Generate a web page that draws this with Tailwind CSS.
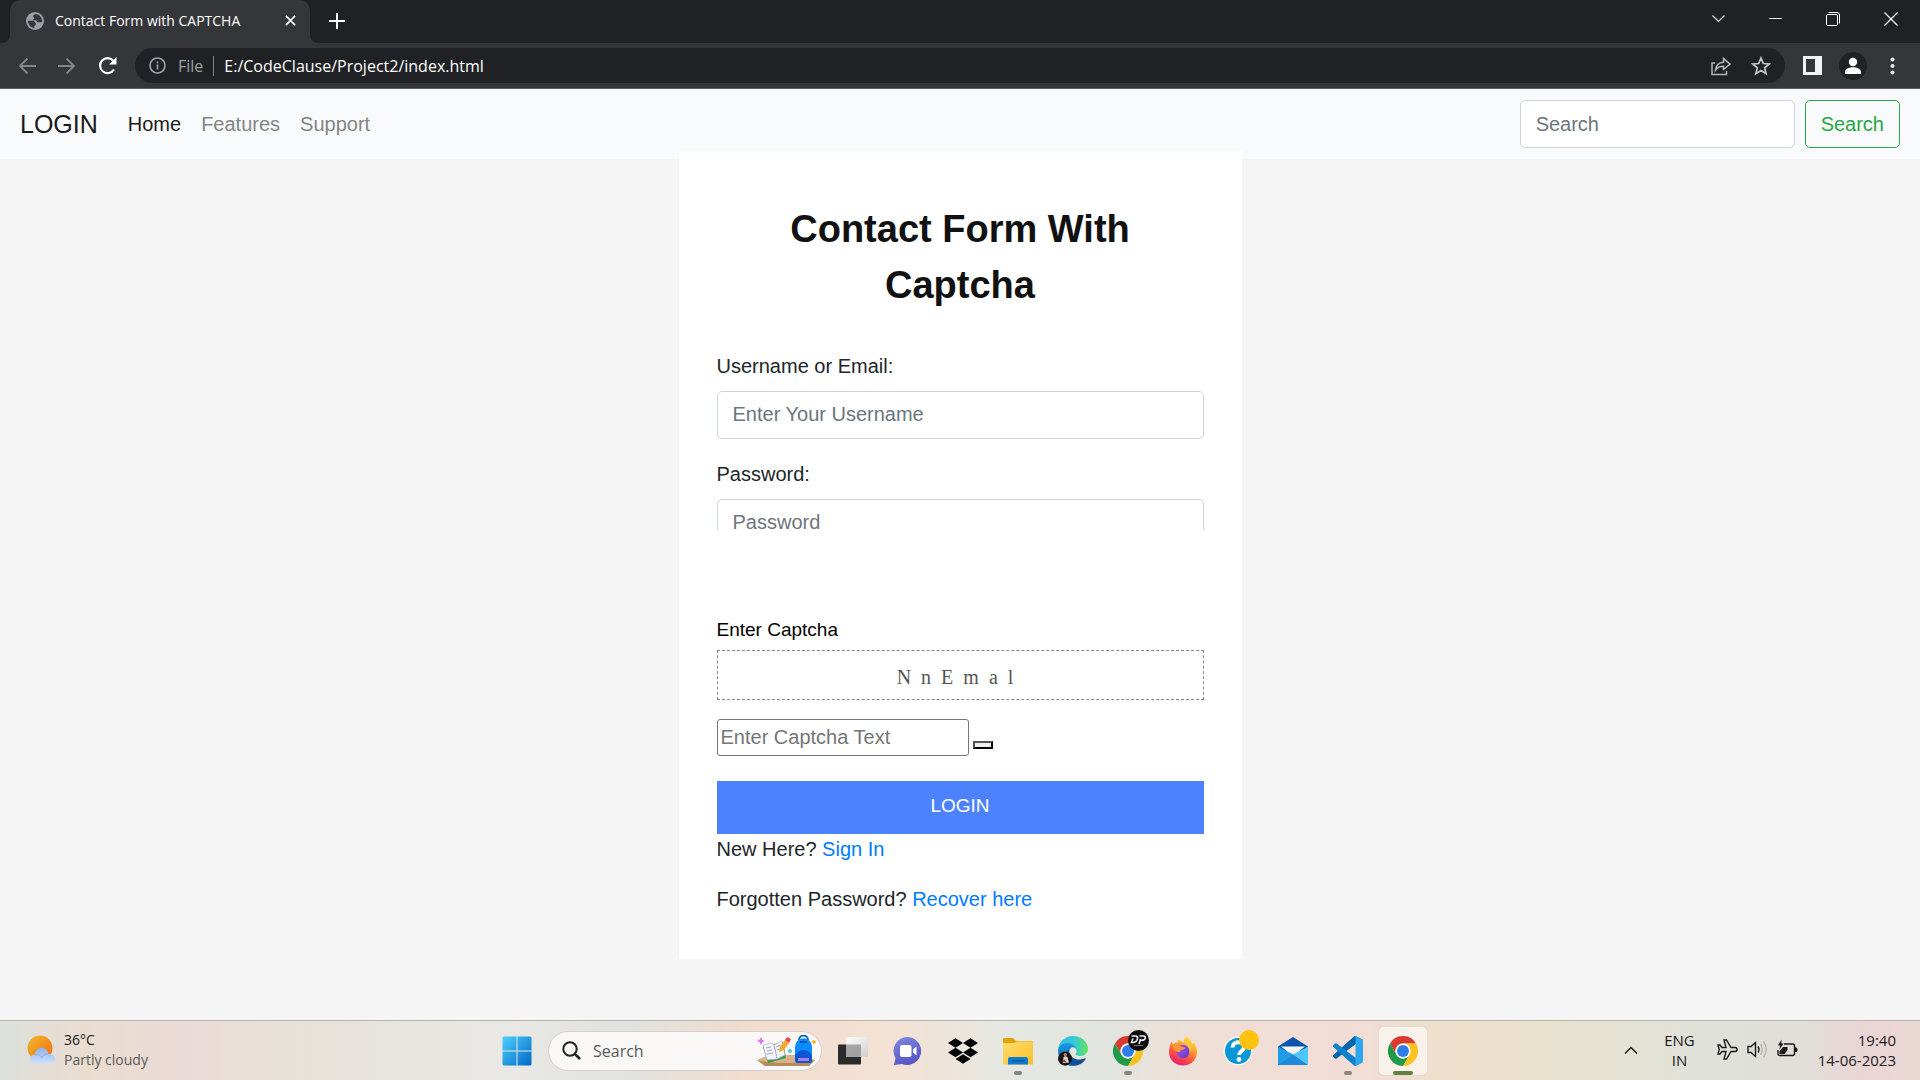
<!DOCTYPE html>
<html lang="en">
<head>
<meta charset="utf-8">
<meta name="viewport" content="width=device-width, initial-scale=1">
<title>Contact Form with CAPTCHA</title>
<script src="https://cdn.jsdelivr.net/npm/@tailwindcss/browser@4"></script>
</head>
<body class="flex min-h-screen flex-col bg-[#f5f5f5] font-['Liberation_Sans',Arial,sans-serif] text-xl leading-[30px] text-[#212529]">

<svg class="hidden">
  <symbol id="chrome" viewBox="0 0 48 48">
    <path fill="#db3b2e" d="M3.2 12A24 24 0 0 1 44.8 12H24A12 12 0 0 0 13.6 30Z"/>
    <path fill="#1f9a4a" d="M3.2 12A24 24 0 0 0 24 48L34.4 30A12 12 0 0 1 13.6 30Z"/>
    <path fill="#fcc31e" d="M44.8 12A24 24 0 0 1 24 48L34.4 30A12 12 0 0 0 24 12Z"/>
    <circle cx="24" cy="24" r="12" fill="#fff"/><circle cx="24" cy="24" r="9.6" fill="#2f7de9"/>
  </symbol>
</svg>

<!-- Browser frame -->
<header class="font-['Open_Sans','Noto_Sans',sans-serif] leading-5 text-white">
  <div class="flex h-[43px] items-end bg-[#202124] pl-[2px]">
    <svg class="size-2" viewBox="0 0 8 8"><path d="M0 8A8 8 0 0 0 8 0V8Z" fill="#35363a"/></svg>
    <div class="flex h-full w-[300px] items-center rounded-t-[10px] bg-[#35363a] px-4 pb-[2px]">
      <svg class="size-[18px]" viewBox="0 0 18 18"><circle cx="9" cy="9" r="9" fill="#9aa0a6"/><path d="M9.6 2C8 2.300 7.200 3.500 7.200 4.600c0 1 1 .9 1 1.800 0 .9-1.300.8-1.300 1.800H9.500c1.500 0 1.300 2 2.700 2h2.200c.9 0 1.700-.5 1.700-1.300C16 5.200 13.200 2.200 9.600 2ZM2 8.800c0 3.800 2.800 6.800 6.300 7.200v-1.800c0-.8 1.700-.9 1.700-2.200 0-1.200-1.200-1-1.200-2 0-.9-1.500-1.200-2.500-1.200Z" fill="#35363a"/></svg>
      <span class="ml-[11px] flex-1 whitespace-nowrap text-sm">Contact Form with CAPTCHA</span>
      <button aria-label="Close tab" class="-mr-1.5 p-1"><svg class="size-[11px]" viewBox="0 0 12 12" stroke="#fff" stroke-width="1.800"><path d="M1 1 11 11M11 1 1 11"/></svg></button>
    </div>
    <svg class="size-2" viewBox="0 0 8 8"><path d="M0 0A8 8 0 0 0 8 8H0Z" fill="#35363a"/></svg>
    <button aria-label="New tab" class="mb-[14px] ml-[11px]"><svg class="size-[16px]" viewBox="0 0 16 16" stroke="#fff" stroke-width="2"><path d="M8 0V16M0 8H16"/></svg></button>
    <div class="ml-auto flex h-full items-center gap-11 pr-[22px] pb-[6px]">
      <button aria-label="Search tabs"><svg class="size-[13px]" viewBox="0 0 13 13" fill="none" stroke="#ddd" stroke-width="1.200"><path d="M.5 3.500 6.500 9.500 12.500 3.500"/></svg></button>
      <button aria-label="Minimize"><svg class="size-[13px]" viewBox="0 0 13 13" stroke="#fff"><path d="M0 6.500H13"/></svg></button>
      <button aria-label="Restore"><svg class="size-[14px]" viewBox="0 0 14 14" fill="none" stroke="#fff"><rect x=".5" y="2.500" width="11" height="11" rx="1.500"/><path d="M2.500.5H11A2.500 2.500 0 0 1 13.500 3V11.500"/></svg></button>
      <button aria-label="Close"><svg class="size-[14px]" viewBox="0 0 14 14" stroke="#fff" stroke-width="1.200"><path d="M.5.5 13.500 13.500M13.500.5.5 13.500"/></svg></button>
    </div>
  </div>
  <div class="flex h-[46px] items-center border-b border-[#5d5e62] bg-[#35363a] pr-[25px] pl-[18px]">
    <button aria-label="Back"><svg class="size-[18px]" viewBox="0 0 18 18" fill="none" stroke="#85868a" stroke-width="1.800"><path d="M18 9H2M9.500 1.500 2 9 9.500 16.500"/></svg></button>
    <button aria-label="Forward" class="ml-[22px]"><svg class="size-[18px]" viewBox="0 0 18 18" fill="none" stroke="#85868a" stroke-width="1.800"><path d="M0 9H16M8.500 1.500 16 9 8.500 16.500"/></svg></button>
    <button aria-label="Reload" class="ml-[22px]"><svg class="size-[20px]" viewBox="0 0 20 20"><path d="M16 13.500A7.500 7.500 0 1 1 15.500 5L17 7" fill="none" stroke="#fff" stroke-width="2.200"/><path d="M18.500 1V8.500H11Z" fill="#fff"/></svg></button>
    <div class="ml-[17px] flex h-[35px] min-w-0 flex-1 items-center rounded-full bg-[#202124] px-[14px]">
      <svg class="size-[17px]" viewBox="0 0 17 17" fill="none" stroke="#9aa0a6" stroke-width="1.700"><circle cx="8.500" cy="8.500" r="7.500"/><path d="M8.500 7.500V12.500M8.500 4.500V6.200"/></svg>
      <span class="ml-3 text-base text-[#9aa0a6]">File</span>
      <span class="mx-[10px] h-5 w-px bg-[#80848a]"></span>
      <input aria-label="Address" value="E:/CodeClause/Project2/index.html" class="min-w-0 flex-1 bg-transparent text-base outline-none">
      <button aria-label="Share"><svg class="size-[20px]" viewBox="0 0 20 20" fill="none" stroke="#b4b7bb" stroke-width="1.500"><path d="M4 7H1V18.500H15.500V15"/><path d="M4.500 14C5 9 8 6.500 12.500 6.200V2.500L19 8.200 12.500 13.500V10.200C9 10.200 6.500 11.300 4.500 14Z"/></svg></button>
      <button aria-label="Bookmark" class="ml-5"><svg class="size-[20px]" viewBox="0 0 20 20" fill="none" stroke="#c3c6ca" stroke-width="1.700"><path d="M10 2 12.300 7.500 18.200 8 13.700 11.900 15.100 17.700 10 14.600 4.900 17.700 6.300 11.900 1.800 8 7.700 7.500Z"/></svg></button>
    </div>
    <button aria-label="Side panel" class="ml-[18px]"><svg class="size-[19px]" viewBox="0 0 19 19"><path fill="#f1f3f4" fill-rule="evenodd" d="M0 0H19V19H0ZM3 3V16H12V3Z"/></svg></button>
    <button aria-label="Profile" class="ml-[17px]"><svg class="size-[28px]" viewBox="0 0 28 28"><circle cx="14" cy="14" r="14" fill="#202124"/><circle cx="14" cy="10" r="4.200" fill="#fff"/><path d="M6 22V20C6 16.500 11 15.200 14 15.200S22 16.500 22 20V22Z" fill="#fff"/></svg></button>
    <button aria-label="Menu" class="ml-[23px]"><svg class="h-[18px] w-[5px]" viewBox="0 0 5 18" fill="#e8eaed"><circle cx="2.500" cy="2.500" r="2"/><circle cx="2.500" cy="9" r="2"/><circle cx="2.500" cy="15.500" r="2"/></svg></button>
  </div>
</header>

<!-- Site navigation -->
<nav class="flex h-[70px] shrink-0 items-center bg-[#f8fafc] px-5">
  <a href="#" class="mr-5 text-[25px] text-[#1a1a1b]">LOGIN</a>
  <a href="#" class="px-[10px] text-[#1a1a1b]">Home</a>
  <a href="#" class="px-[10px] text-[#848586]">Features</a>
  <a href="#" class="px-[10px] text-[#848586]">Support</a>
  <form class="ml-auto flex items-center gap-[10px]">
    <input type="search" aria-label="Search" placeholder="Search" class="h-12 w-[275px] rounded-[5px] border border-[#ced4da] bg-white px-[15px] placeholder:text-[#6c757d]">
    <button type="button" class="h-12 rounded-[5px] border border-[#28a745] px-[15px] text-[#28a745]">Search</button>
  </form>
</nav>

<!-- Contact form -->
<main class="flex-1">
  <form class="relative mx-auto -mt-2 w-[563px] bg-white px-[38px] pt-[50px] pb-[45px]">
    <h1 class="mb-[38px] text-center text-[38px] leading-[56px] font-bold text-[#111]">Contact Form With Captcha</h1>
    <div class="h-[179px] overflow-hidden">
      <label for="user" class="mb-[10px] block">Username or Email:</label>
      <input id="user" type="text" placeholder="Enter Your Username" class="mb-5 block h-12 w-full rounded-[5px] border border-[#ced4da] px-[15px] pb-[2px] placeholder:text-[#6c757d]">
      <label for="pass" class="mb-[10px] block">Password:</label>
      <input id="pass" type="password" placeholder="Password" class="block h-12 w-full rounded-[5px] border border-[#ced4da] px-[15px] pb-[2px] placeholder:text-[#6c757d]">
    </div>
    <label for="captcha" class="mt-[85px] mb-[5px] block text-[19px] text-black">Enter Captcha</label>
    <div class="flex h-[50px] items-center justify-center border border-dashed border-[#888] pt-[3px] pr-[10px] font-['Liberation_Serif',serif] whitespace-pre text-[#555]">N  n  E  m  a  l</div>
    <div class="mt-[19px] flex items-end gap-1">
      <input id="captcha" type="text" placeholder="Enter Captcha Text" class="h-[37px] w-[252px] rounded-[3px] border border-[#767676] px-[3px] placeholder:text-[#757575]">
      <button type="button" aria-label="Refresh captcha" class="mb-[7px] h-2 w-5 border-2 border-t-[#555] border-r-black border-b-black border-l-[#555] bg-[#efefef]"></button>
    </div>
    <button type="button" class="mt-[25px] block h-[53px] w-full bg-[#4d82ff] pb-[3px] text-[19px] text-white">LOGIN</button>
    <p class="mb-5">New Here? <a href="#" class="text-[#007bff]">Sign In</a></p>
    <p>Forgotten Password? <a href="#" class="text-[#007bff]">Recover here</a></p>
  </form>
</main>

<!-- Taskbar -->
<footer class="grid h-[60px] grid-cols-[1fr_auto_1fr] items-center border-t border-[#b5b2ae] bg-[linear-gradient(90deg,#dde0dd_0%,#eaddd0_4.500%,#ebdad7_9%,#e6e2da_16%,#e9e8e4_26%,#e0e3df_33%,#f2dccd_39%,#f3e2d5_47%,#e6e8e2_52%,#e2e4df_58%,#f0dfd6_63%,#f2ddd6_70%,#eee0cb_76%,#e5e2d1_83%,#dfe1da_89%,#e0dfd9_94%,#ebd4d5_97%,#ead8d5_100%)] font-['Open_Sans','Noto_Sans',sans-serif] text-sm leading-5 text-[#1b1b1b]">
  <div class="flex items-center pb-[2px] pl-[27px]">
    <svg class="h-[30px] w-[29px]" viewBox="0 0 29 30"><defs><linearGradient id="sun" x2="1" y2="1"><stop stop-color="#eebc30"/><stop offset=".8" stop-color="#f47a13"/></linearGradient><linearGradient id="cloud" x2="0" y2="1"><stop stop-color="#8fb2f2"/><stop offset="1" stop-color="#cfe1fb"/></linearGradient></defs><circle cx="13" cy="13" r="12.500" fill="url(#sun)"/><path d="M7.500 28.500C1.500 28.500 1.500 19.500 8 19.500 9 10.500 20 10.500 21.500 19 29.500 18.500 30 28.500 23.500 28.500Z" fill="url(#cloud)"/><path d="M8 19.500C12 19 14 21 14.500 23 16 20 19 19 21.500 19" fill="none" stroke="#89acea"/></svg>
    <div class="ml-2">
      <div>36°C</div>
      <div class="text-[#5c5957]">Partly cloudy</div>
    </div>
  </div>

  <div class="flex items-center gap-[7px]">
    <button aria-label="Start" class="grid size-12 place-items-center"><svg class="size-[30px]" viewBox="0 0 30 30"><defs><linearGradient id="win" x2="1" y2="1"><stop stop-color="#4fd0fd"/><stop offset="1" stop-color="#0067c9"/></linearGradient></defs><path fill="url(#win)" d="M1.500.5H14.500V14.500H.5V1.500ZM15.500.5H28.500L29.500 1.500V14.500H15.500ZM.5 15.500H14.500V29.500H1.500L.5 28.500ZM15.500 15.500H29.500V28.500L28.500 29.500H15.500Z"/></svg></button>
    <label class="flex h-10 w-[274px] items-center rounded-full border border-[#d5d0cb] bg-[#f9f8f6] pr-[5px] pl-[13px]">
      <svg class="size-[19px]" viewBox="0 0 19 19" fill="none" stroke="#222"><circle cx="8" cy="8" r="6.700" stroke-width="2"/><path d="M12.800 12.800 18 18" stroke-width="2.600"/></svg>
      <input type="search" aria-label="Taskbar search" placeholder="Search" class="ml-3 min-w-0 flex-1 bg-transparent text-base outline-none placeholder:text-[#5c5a59]">
      <svg class="h-[32px] w-[60px]" viewBox="0 0 60 32"><path d="M1 25 13 20H47L59 25 53 31H9Z" fill="#d9b48a"/><path d="M1 25Q10 28 30 28T59 25L53 31H9Z" fill="#b98b58"/><path d="M7 12 27 7 30 23 12 28Z" fill="#3e9a4f"/><path d="M7 10 16 8 18 10 26 6 29 20 21 24 11 25Z" fill="#f4f4fb" stroke="#a8a8c4" stroke-width=".6"/><path d="M18 10 21 23M10 13 15 12M11 16 16 15M11 19 17 18M20 12 25 10M21 15 26 13" stroke="#8f93b5" stroke-width=".8"/><path d="M23 17 24 12 29 5 33 8 28 15Z" fill="#f6a829"/><path d="M29 5 31 2 35 4 33 8Z" fill="#ea4553"/><path d="M5 2 6.500 5 9 6 6.500 7 5 10 3.500 7 1 6 3.500 4.500Z" fill="#dc76f5"/><circle cx="34" cy="16" r="2" fill="#4ccdde"/><circle cx="58" cy="7" r="1.800" fill="#f9ad13"/><path d="M43 5C43-1 52-1 52 5" fill="none" stroke="#1460c2" stroke-width="1.800"/><path d="M39 13C39 0 56 0 56 13V25Q56 28 53 28H42Q39 28 39 25Z" fill="#0a8cff"/><path d="M39 20Q47 10 56 20V25Q56 28 53 28H42Q39 28 39 25Z" fill="#0b57cf"/><path d="M42 23H53V26H42Z" fill="#b279f7"/><path d="M44 7H51" stroke="#083e9f" stroke-width="1.500"/></svg>
    </label>

    <button aria-label="Task view" class="grid size-12 place-items-center"><svg class="size-[30px]" viewBox="0 0 30 30"><defs><linearGradient id="tv" x2="1" y2="1"><stop stop-color="#fff"/><stop offset="1" stop-color="#cfcfcf"/></linearGradient></defs><rect y="8.500" width="23" height="20" rx="1" fill="#2b2b2b"/><rect x="8" y="1" width="22" height="20" rx="1" fill="url(#tv)"/><path d="M8 8.500H23V21H8Z" fill="#8c8c8c" opacity=".75"/></svg></button>
    <button aria-label="Chat" class="grid size-12 place-items-center"><svg class="size-[30px]" viewBox="0 0 30 30"><defs><linearGradient id="chat" x1=".3" x2=".7" y2="1"><stop stop-color="#7b84dd"/><stop offset="1" stop-color="#5551c5"/></linearGradient></defs><path fill="url(#chat)" d="M15 1A14 14 0 1 1 9 28L1 29 2.500 22A14 14 0 0 1 15 1Z"/><rect x="7" y="9" width="11.500" height="12" rx="2" fill="#fff"/><path d="M20 13.500 23.500 10.500V19.500L20 16.500Z" fill="#fff"/></svg></button>
    <button aria-label="Dropbox" class="grid size-12 place-items-center"><svg class="size-[30px]" viewBox="0 0 24 24"><path d="M6 1.800 0 5.600 6 9.400 12 5.600ZM18 1.800 12 5.600 18 9.400 24 5.600ZM0 13.200 6 17 12 13.200 6 9.400ZM18 9.400 12 13.200 18 17 24 13.200ZM6 18.300 12 22.100 18 18.300 12 14.500Z"/></svg></button>
    <button aria-label="File Explorer" class="relative grid size-12 place-items-center"><svg class="size-[30px]" viewBox="0 0 30 30"><defs><linearGradient id="fold" x2="1" y2="1"><stop stop-color="#ffdd6c"/><stop offset="1" stop-color="#fbc02a"/></linearGradient></defs><path d="M0 3Q0 2 1 2H10L13 5H29Q30 5 30 6V12H0Z" fill="#e1a108"/><path d="M0 7H11L14 5.500H30V27.500Q30 28.500 29 28.500H1Q0 28.500 0 27.500Z" fill="url(#fold)"/><path d="M5 28.500V23Q5 21 7 21H23Q25 21 25 23V28.500Z" fill="#0c7bd0"/><path d="M9 24.700H21.500" stroke="#064d90" stroke-width="1.300"/></svg><span class="absolute bottom-0 h-1 w-2 rounded-full bg-[#858482]"></span></button>
    <button aria-label="Edge" class="grid size-12 place-items-center"><svg class="size-[30px]" viewBox="0 0 256 256"><defs><linearGradient id="e1" x1="0" x2="1"><stop stop-color="#0c59a4"/><stop offset="1" stop-color="#114a8b"/></linearGradient><linearGradient id="e2" x1=".5" y1="0" x2=".4" y2="1"><stop stop-color="#1b9de2"/><stop offset="1" stop-color="#0d65b4"/></linearGradient><linearGradient id="e3"><stop stop-color="#35bdf0"/><stop offset=".55" stop-color="#33c9d5"/><stop offset="1" stop-color="#66e35a"/></linearGradient></defs><g transform="translate(-4.600 -4.900)"><path fill="url(#e1)" d="M235.700 195.100a93.700 93.700 0 0 1-10.600 4.700 101.900 101.900 0 0 1-35.900 6.500c-47.300 0-88.500-32.600-88.500-74.300a31.500 31.500 0 0 1 16.400-27.600c-42.800 1.800-53.800 46.400-53.800 72.500 0 73.900 68.100 81.400 82.800 81.400 7.900 0 19.800-2.300 27-4.600l1.300-.4a128.300 128.300 0 0 0 66.600-52.800 4 4 0 0 0-5.300-5.400z"/><path fill="url(#e2)" d="M110.300 246.300A79.200 79.200 0 0 1 87.600 225a80.700 80.700 0 0 1 29.500-120.600c3.100-1.500 8.500-4.100 15.500-4a32.400 32.400 0 0 1 25.700 13 31.900 31.900 0 0 1 6.400 18.700c0-.2 24.500-79.600-80-79.600-43.900 0-80 41.700-80 78.200a130.200 130.200 0 0 0 12.100 56 128 128 0 0 0 156.400 67.100 75.600 75.600 0 0 1-62.900-7.500z"/><path fill="url(#e3)" d="M156.900 153.800c-.8 1-3.300 2.500-3.300 5.700 0 2.600 1.700 5.100 4.700 7.200 14.400 10 41.500 8.700 41.600 8.700a59.600 59.600 0 0 0 30.300-8.400 61.400 61.400 0 0 0 30.400-52.900c.3-22.400-8-37.300-11.300-43.900C228.100 28.800 182.400 4.900 132.600 4.900a128 128 0 0 0-128 126.200c.5-36.500 36.800-66 80-66 3.500 0 23.500.3 42 10 16.300 8.600 24.900 19 30.800 29.200 6.200 10.700 7.300 24.200 7.300 29.500s-2.700 13.400-7.800 20z"/></g><circle cx="60" cy="193" r="60" fill="#171515"/><circle cx="62" cy="158" r="14" fill="#b98567"/><path d="M40 228 48 180Q62 165 80 180L94 228Z" fill="#ddd6d0"/><path d="M30 220 54 200 72 222Z" fill="#80382c"/></svg></button>
    <button aria-label="Chrome, profile DP" class="relative grid size-12 place-items-center"><svg class="size-[30px]"><use href="#chrome"/></svg><span class="absolute top-[3px] right-[3px] grid size-[21px] place-items-center rounded-full bg-[#0b0b0b]"><svg class="size-[17px]" viewBox="0 0 17 17" fill="none" stroke="#eee" stroke-width="1.600"><path d="M1.500 4H6Q8.500 5 7 8 6 10.500 3 10.500H1.500L3 6.500M9 12 10.500 7M9.500 4H14Q16 5 15 7 14 8.500 10.500 8.500"/><path d="M4 13.500H13" stroke="#777" stroke-width="1"/></svg></span><span class="absolute bottom-0 h-1 w-2 rounded-full bg-[#858482]"></span></button>
    <button aria-label="Firefox" class="grid size-12 place-items-center"><svg class="size-[30px]" viewBox="0 0 30 30"><defs><linearGradient id="ff" x1=".8" y1="0" x2=".3" y2="1"><stop stop-color="#fff04a"/><stop offset=".35" stop-color="#ffa52b"/><stop offset=".7" stop-color="#ff4c45"/><stop offset="1" stop-color="#e51b78"/></linearGradient><linearGradient id="fp" x2="1" y2="1"><stop stop-color="#b74fe8"/><stop offset="1" stop-color="#5a3bce"/></linearGradient></defs><path fill="url(#ff)" d="M18.500.5C22 3 24 5 24.500 8L26 6.500C28 10 29.500 13 29 17 28.500 24 22.500 29.500 15 29.500S1 24 1 16C1 12 2 8 4 5.500L5 8.500C7 6.500 9 6 10.500 6.500L9.500 4C12 4 14 5 15.500 7 15.500 4 16.500 2 18.500.5Z"/><circle cx="15" cy="15.500" r="6.700" fill="url(#fp)"/><path d="M4 9C8 7 11 8 12.500 10.500 14 11 16 11 17.500 12 16 14 13.500 13.500 12.500 14.500 12 16 10 17 8.500 15.500 7 14 5 13 4 9Z" fill="#ff982e"/><path d="M15.500 7C20 9 23 13 21 17.500 25 13 23 8 18.500 5Z" fill="#ffc83a"/></svg></button>
    <button aria-label="Help" class="relative grid size-12 place-items-center"><svg class="size-[30px]" viewBox="0 0 30 30"><circle cx="15" cy="15" r="14.500" fill="#f6f4f2"/><circle cx="15" cy="15" r="13" fill="#0797d7"/><path d="M9.500 11.500C9.500 4.500 21 4.500 21 11 21 15 16 15.500 16 19" fill="none" stroke="#fff" stroke-width="4"/><circle cx="16" cy="23.500" r="2.400" fill="#fff"/></svg><span class="absolute top-[3px] right-[3px] size-5 rounded-full bg-[#ffc20e]"></span></button>
    <button aria-label="Mail" class="grid size-12 place-items-center"><svg class="size-[30px]" viewBox="0 0 30 30"><path d="M0 10.500 15 1 30 10.500V15H0Z" fill="#0b55ad"/><path d="M3 10.500H27L15 20Z" fill="#f5f5f5"/><path d="M0 10.500 15 18.500 30 29H0Z" fill="#1e9ce6"/><path d="M30 10.500V29L15 18.500Z" fill="#4cc7f6"/><path d="M0 29 15 18.500 30 29Z" fill="#2089dc"/></svg></button>
    <button aria-label="Visual Studio Code" class="relative grid size-12 place-items-center"><svg class="size-[30px]" viewBox="0 0 100 100"><path fill="#0065a9" d="M96.500 10.800 75.900.9a6.200 6.200 0 0 0-7.100 1.200L1.300 63.600a4.200 4.200 0 0 0 0 6.200l5.500 5a4.200 4.200 0 0 0 5.300.2L93.400 13.400a4.100 4.100 0 0 1 6.600 3.300v-.2a6.300 6.300 0 0 0-3.500-5.700z"/><path fill="#0e81cf" d="M96.500 89.200 75.900 99.100a6.200 6.200 0 0 1-7.100-1.200L1.300 36.400a4.200 4.200 0 0 1 0-6.200l5.500-5a4.200 4.200 0 0 1 5.300-.2L93.400 86.600a4.100 4.100 0 0 0 6.600-3.300v.2a6.300 6.300 0 0 1-3.500 5.700z"/><path fill="#2ba6f1" d="M75.900 99.100a6.200 6.200 0 0 1-7.100-1.200c2.300 2.300 6.200.7 6.200-2.600V4.700c0-3.300-3.900-4.900-6.200-2.600a6.200 6.200 0 0 1 7.100-1.200l20.600 9.900A6.300 6.300 0 0 1 100 16.400v67.200a6.300 6.300 0 0 1-3.500 5.600z"/></svg><span class="absolute bottom-0 h-1 w-2 rounded-full bg-[#8d8380]"></span></button>
    <button aria-label="Chrome" class="relative grid size-12 place-items-center rounded-[5px] bg-[#f9f2eb] shadow-[0_0_1px_1px_#e4dad0]"><svg class="size-[30px]"><use href="#chrome"/></svg><span class="absolute bottom-0 h-1 w-5 rounded-full bg-[#63803c]"></span></button>
  </div>

  <div class="flex items-center justify-end pr-6 pb-[2px] text-[15px]">
    <button aria-label="Show hidden icons"><svg class="size-[14px]" viewBox="0 0 14 14" fill="none" stroke="#1b1b1b" stroke-width="1.500"><path d="M1 10.500 7 4.500 13 10.500"/></svg></button>
    <div class="ml-[26px] text-center">ENG<br>IN</div>
    <svg class="ml-[22px] size-[21px]" viewBox="0 0 21 21" fill="none" stroke="#1b1b1b" stroke-width="1.400"><path d="M1 6H3L5 8.500H9L7 1H9.500L14 8.500H18Q20 8.500 20 10.500T18 12.500H14L9.500 20H7L9 12.500H5L3 15H1L2.200 10.500Z"/></svg>
    <svg class="ml-[9px] size-[21px]" viewBox="0 0 21 21" fill="none" stroke="#1b1b1b" stroke-width="1.400"><path d="M1 7.500H4L8.500 3.500V17.500L4 13.500H1Z"/><path d="M11 7.500Q13 10.500 11 13.500"/><path d="M13.500 5Q17 10.500 13.500 16M16.500 2.500Q22 10.500 16.500 18.500" stroke="#b5b5b0"/></svg>
    <svg class="ml-[9px] size-[21px]" viewBox="0 0 21 21"><path d="M7 5H15.500Q17.500 5 17.500 7V14.500Q17.500 16.500 15.500 16.500H3Q1 16.500 1 14.500V11" fill="none" stroke="#1b1b1b" stroke-width="1.400"/><path d="M18 8.500H19.500Q20.500 9 20.500 10.700T19.500 13H18ZM2.500 15V12L6 8H10.500V11L7.500 15ZM4.500.5 1 6.500H3L2.500 10.500 6.500 4.500H4.300Z" fill="#1b1b1b"/></svg>
    <div class="ml-[20px] text-right">19:40<br>14-06-2023</div>
  </div>
</footer>
</body>
</html>
